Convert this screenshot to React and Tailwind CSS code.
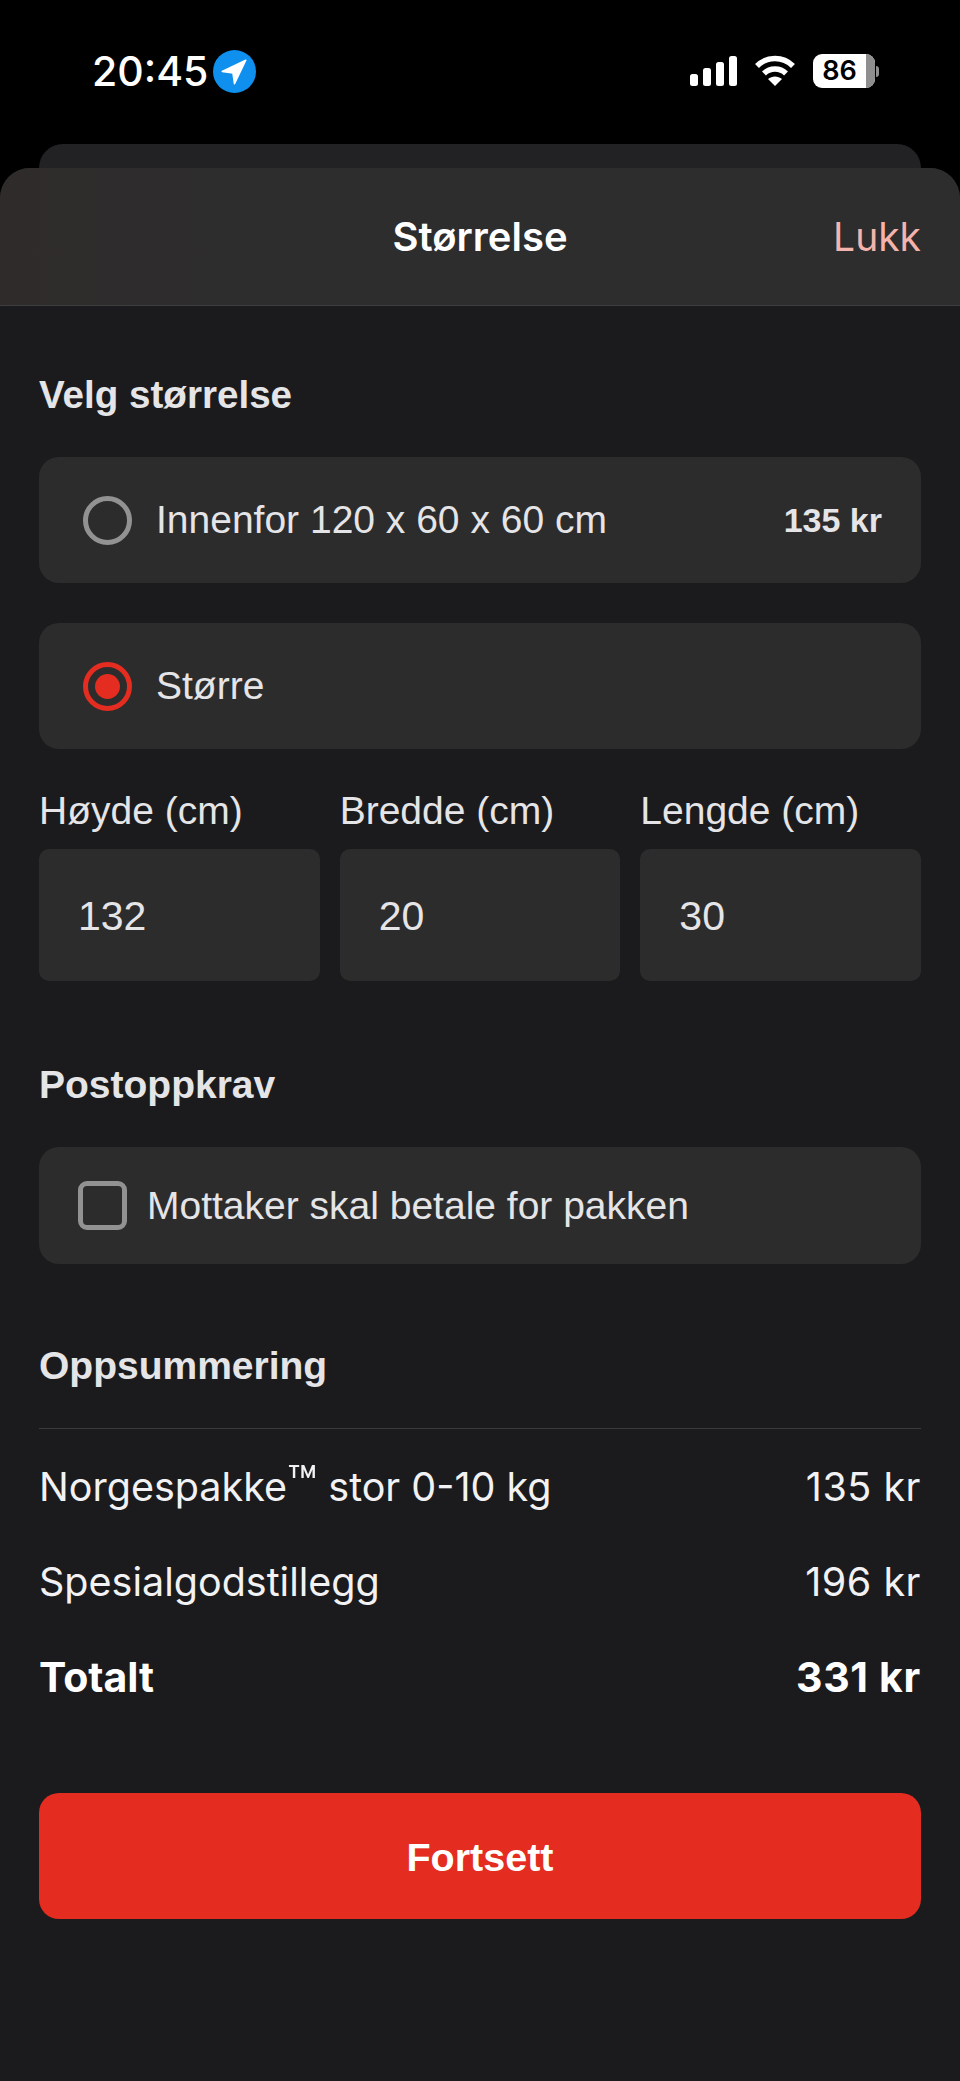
import React from "react"

const sans = "font-['Liberation_Sans',Arial,sans-serif]"

const StatusBar = () => (
  <div className="h-[144px] bg-black pl-[92px] pr-[81px] pt-[49px] flex justify-between items-start text-white">
    <div className="flex items-center gap-[5px] h-[44px]">
      <span className="font-['Inter',sans-serif] text-[41px] font-medium leading-none">20:45</span>
      <svg width="43" height="43" viewBox="0 0 42 42">
        <circle cx="21" cy="21" r="21" fill="#0f8fee" />
        <path d="M32 10 L9 21 L19.5 22.5 L21 33 Z" fill="#fff" stroke="#fff" strokeWidth="1.5" strokeLinejoin="round" />
      </svg>
    </div>
    <div className="flex items-center gap-[17px] h-[44px]">
      <svg width="47" height="30" viewBox="0 0 47 30" fill="#fff">
        <rect x="0" y="18" width="8" height="12" rx="2.5" />
        <rect x="13" y="12" width="8" height="18" rx="2.5" />
        <rect x="26" y="6" width="8" height="24" rx="2.5" />
        <rect x="39" y="0" width="8" height="30" rx="2.5" />
      </svg>
      <svg width="42" height="32" viewBox="0 0 42 32" fill="none" stroke="#fff" strokeWidth="5.5">
        <path d="M3 11 C13 1 29 1 39 11" />
        <path d="M10 18.5 C16 12.5 26 12.5 32 18.5" />
        <path d="M21 31 L14 24 C18 20.5 24 20.5 28 24 Z" fill="#fff" stroke="none" />
      </svg>
      <div className="flex items-center gap-[1px]">
        <div className="w-[62px] h-[34px] rounded-[9px] bg-white flex overflow-hidden">
          <span className="flex-1 text-black font-['Inter',sans-serif] text-[27px] font-semibold leading-[34px] text-center">86</span>
          <div className="w-[9px] bg-[#8e8e8e]" />
        </div>
        <div className="w-[3px] h-[11px] rounded-r-full bg-[#8e8e8e]" />
      </div>
    </div>
  </div>
)

const Radio = ({ checked }) => (
  <div className={`w-[49px] h-[49px] rounded-full border-[5px] flex items-center justify-center shrink-0 ${checked ? "border-[#e42c20]" : "border-[#929292]"}`}>
    {checked && <div className="w-[25px] h-[25px] rounded-full bg-[#e42c20]" />}
  </div>
)

const SizeOption = ({ label, price, checked }) => (
  <div className="h-[126px] rounded-[20px] bg-[#2c2c2d] pl-[44px] pr-[39px] flex items-center">
    <Radio checked={checked} />
    <span className="ml-[24px] flex-1 text-[39px] leading-[46px] text-[#e5e5e7]">{label}</span>
    {price && <span className="text-[34px] leading-[40px] font-bold text-[#e5e5e7]">{price}</span>}
  </div>
)

const DimInput = ({ label, value }) => (
  <div className="flex-1">
    <div className="text-[39px] leading-[43px] text-[#e5e5e7]">{label}</div>
    <div className="mt-[17px] h-[132px] rounded-[10px] bg-[#2c2c2d] pl-[39px] pt-[3px] flex items-center text-[41px] text-[#e5e5e7]">{value}</div>
  </div>
)

const SummaryRow = ({ label, value, bold }) => (
  <div className={`h-[95px] flex items-center justify-between font-['Inter',sans-serif] ${bold ? "text-[41px] font-bold text-white" : "text-[39.5px] text-[#f2f2f4]"}`}>
    <span>{label}</span>
    <span className={bold ? "tracking-[0.7px]" : "tracking-[0.5px]"}>{value}</span>
  </div>
)

export default function App() {
  return (
    <div className={`w-[960px] h-[2081px] overflow-hidden bg-black ${sans}`}>
      <StatusBar />
      <div className="mx-[39px] h-[24px] rounded-t-[24px] bg-[#222225]" />
      <div className="h-[1913px] rounded-t-[30px] bg-[#1b1b1d] overflow-hidden">
        <div className="relative h-[138px] bg-[linear-gradient(90deg,#2f2b2b_0%,#2e2c2c_15%,#2d2d2e_30%,#2d2d2e_100%)] border-b border-[#3e3e40] flex items-center justify-center">
          <span className="font-['Inter',sans-serif] text-[40px] font-semibold text-white">Størrelse</span>
          <span className="absolute right-[39px] top-[45px] font-['Inter',sans-serif] text-[39px] leading-[48px] text-[#f4b4ac]">Lukk</span>
        </div>

        <div className="px-[39px]">
          <h2 className="mt-[66px] text-[38.6px] leading-[45px] font-bold text-[#e5e5e7]">Velg størrelse</h2>
          <div className="mt-[40px] flex flex-col gap-[40px]">
            <SizeOption label="Innenfor 120 x 60 x 60 cm" price="135 kr" />
            <SizeOption label="Større" checked />
          </div>
          <div className="mt-[40px] flex gap-[20px]">
            <DimInput label="Høyde (cm)" value="132" />
            <DimInput label="Bredde (cm)" value="20" />
            <DimInput label="Lengde (cm)" value="30" />
          </div>

          <h2 className="mt-[81px] text-[39px] leading-[45px] font-bold text-[#e5e5e7]">Postoppkrav</h2>
          <div className="mt-[40px] h-[117px] rounded-[20px] bg-[#2c2c2d] pl-[39px] flex items-center">
            <div className="w-[49px] h-[49px] rounded-[9px] border-[5px] border-[#929292] shrink-0" />
            <span className="ml-[20px] text-[39px] leading-[46px] text-[#e5e5e7]">Mottaker skal betale for pakken</span>
          </div>

          <h2 className="mt-[79px] text-[39px] leading-[45px] font-bold text-[#e5e5e7]">Oppsummering</h2>
          <div className="mt-[40px] border-t border-[#3a3a3c] pt-[11px]">
            <SummaryRow label={<>Norgespakke<span className="text-[1.25em] leading-none">™</span> stor 0-10 kg</>} value="135 kr" />
            <SummaryRow label="Spesialgodstillegg" value="196 kr" />
            <SummaryRow label="Totalt" value="331 kr" bold />
          </div>

          <button className="mt-[68px] w-full h-[126px] pt-[3px] rounded-[20px] bg-[#e42c20] text-[39.5px] font-bold text-white">Fortsett</button>
        </div>
      </div>
    </div>
  )
}
